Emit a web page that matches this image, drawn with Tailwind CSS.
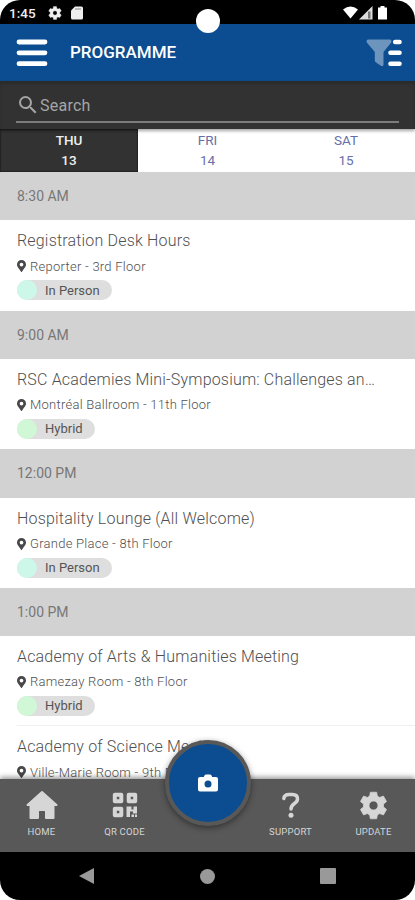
<!DOCTYPE html>
<html lang="en">
<head>
<meta charset="utf-8">
<title>Programme</title>
<script src="https://cdn.jsdelivr.net/npm/@tailwindcss/browser@4"></script>
</head>
<body class="bg-white">
<svg class="hidden">
  <symbol id="pin" viewBox="0 0 384 512"><path fill="currentColor" d="M172 502C27 291 0 270 0 192a192 192 0 1 1 384 0c0 78-27 99-172 310a24 24 0 0 1-40 0zM192 272a80 80 0 1 0 0-160 80 80 0 0 0 0 160z"/></symbol>
  <symbol id="gear" viewBox="0 0 24 24"><path fill="currentColor" fill-rule="evenodd" d="M9.4 1h5.2l.6 3.2 1.9 1.1 3.1-1.1 2.6 4.500-2.500 2.100v2.400l2.500 2.100-2.600 4.500-3.100-1.100-1.900 1.100-.6 3.200H9.400l-.6-3.200-1.900-1.100-3.100 1.100-2.600-4.500 2.500-2.100v-2.400L1.200 8.700l2.600-4.500 3.100 1.100 1.900-1.100zM12 8.300a3.700 3.700 0 1 0 0 7.400 3.700 3.700 0 0 0 0-7.400z" stroke="currentColor" stroke-width=".6" stroke-linejoin="round"/></symbol>
</svg>
<div class="relative flex flex-col w-[415px] h-[900px] overflow-hidden rounded-[20px] bg-white font-['Roboto',sans-serif] text-[#505050]">
  <div class="relative h-6 shrink-0 bg-black text-[#eee] flex items-center pl-[9px] pr-[27px]">
    <span class="text-[13.500px] leading-6 font-medium pt-[2px] w-[39px]">1:45</span>
    <svg class="size-[14px] mt-[2px]"><use href="#gear"/></svg>
    <svg class="ml-[9px] mt-[2px] w-3 h-[14px]" viewBox="0 0 12 14"><path fill="currentColor" d="M4 .5h6.500a1.500 1.500 0 0 1 1.500 1.500v10a1.500 1.500 0 0 1-1.500 1.500h-9A1.500 1.500 0 0 1 0 12V4.500z"/><path stroke="#888" d="M5 2v2M7 2v2M9 2v2"/></svg>
    <svg class="ml-auto mt-[2px] w-[46px] h-[14px]" viewBox="0 0 46 14"><path fill="#fff" d="M1 3.500Q8.500-2.500 16 3.500L8.500 12.500z"/><path fill="#ddd" d="M17 13.500L30.500 0v13.500z"/><path fill="#777" d="M26 5.500h2.500v7H26z"/><path fill="#fff" d="M38.500 0h4v1.500H45v12h-9v-12h2.500z"/></svg>
    <div class="absolute z-10 left-[196px] top-[9px] size-6 rounded-full bg-white"></div>
  </div>
  <header class="h-[57px] shrink-0 bg-[#0b4d90] flex items-center pl-4 pr-[13px] text-white">
    <svg class="w-8 h-[28px]" viewBox="0 0 32 28"><path stroke="#fff" stroke-width="4.800" stroke-linecap="round" d="M3 3h26M3 13.800h26M3 24.700h26"/></svg>
    <h1 class="ml-[22px] mt-px text-[17px] font-medium">PROGRAMME</h1>
    <svg class="ml-auto w-[36px] h-[28px]" viewBox="0 0 36 28"><path fill="#6d94bd" d="M2.500.5h21c2 0 2.500 2 1.500 3.300L17.500 13v12.500c0 1.500-1.500 2-2.700 1.200l-5-3.500c-.7-.5-1-1-1-1.800V13L1 3.800C0 2.500.5.500 2.500.5z"/><path stroke="#fff" stroke-width="4.600" stroke-linecap="round" d="M29.200 3h4.300M24.500 13.800h9M24.500 24.700h9"/></svg>
  </header>
  <div class="relative z-10 h-12 shrink-0 bg-[#323232] px-4 shadow-[0_2px_3px_rgba(0,0,0,.35),inset_0_3px_3px_rgba(0,0,0,.15)]">
    <div class="h-[42px] border-b-2 border-[#7c7c7c] flex items-center pt-[8px] text-[#a5a5a5]">
      <svg class="size-[24px]" viewBox="0 0 24 24"><path fill="currentColor" d="M15.500 14h-.79l-.28-.27A6.470 6.470 0 0 0 16 9.500 6.500 6.500 0 1 0 9.500 16c1.610 0 3.090-.59 4.230-1.570l.27.28v.79l5 4.990L20.490 19l-4.990-5zm-6 0C7.010 14 5 11.990 5 9.500S7.010 5 9.500 5 14 7.010 14 9.500 11.990 14 9.500 14z"/></svg>
      <span class="text-base pt-px tracking-[0.25px]">Search</span>
    </div>
  </div>
  <div class="h-[43px] shrink-0 flex text-center text-[13.500px] leading-5 pt-px text-[#6670a8]">
    <div class="w-[138px] -mt-px pt-px bg-[#323232] text-[#eee] font-medium shadow-[inset_0_0_2px_#000]">THU<br>13</div>
    <div class="w-[139px]">FRI<br>14</div>
    <div class="flex-1">SAT<br>15</div>
  </div>
  <main id="list" class="flex-1 min-h-0 overflow-hidden">
    <h2 class="h-[48.400px] bg-[#d2d2d2] pl-[17px] text-[14px] leading-[49px] text-[#777]">8:30 AM</h2>
    <article class="h-[90.200px] pl-[17px] pt-[10px]">
      <h3 class="text-[16px] leading-[22px] font-light tracking-[0.18px]">Registration Desk Hours</h3>
      <p class="flex items-center h-[28px] text-[13px] font-light tracking-[0.26px]"><svg class="w-[9px] h-3 mr-1 text-[#484848]"><use href="#pin"/></svg>Reporter - 3rd Floor</p>
      <span class="flex items-center w-[95px] h-5 rounded-full bg-[#dedede] text-[13px] text-[#555]"><i class="size-5 rounded-full bg-[#cdf7e9] mr-2"></i>In Person</span>
    </article>
    <h2 class="h-[48.400px] bg-[#d2d2d2] pl-[17px] text-[14px] leading-[49px] text-[#777]">9:00 AM</h2>
    <article class="h-[90.200px] pl-[17px] pt-[10px]">
      <h3 class="text-[16px] leading-[22px] font-light tracking-[0.18px]">RSC Academies Mini-Symposium: Challenges an…</h3>
      <p class="flex items-center h-[28px] text-[13px] font-light tracking-[0.26px]"><svg class="w-[9px] h-3 mr-1 text-[#484848]"><use href="#pin"/></svg>Montréal Ballroom - 11th Floor</p>
      <span class="flex items-center w-[78px] h-5 rounded-full bg-[#dedede] text-[13px] text-[#555]"><i class="size-5 rounded-full bg-[#d0f7d6] mr-2"></i>Hybrid</span>
    </article>
    <h2 class="h-[48.400px] bg-[#d2d2d2] pl-[17px] text-[14px] leading-[49px] text-[#777]">12:00 PM</h2>
    <article class="h-[90.200px] pl-[17px] pt-[10px]">
      <h3 class="text-[16px] leading-[22px] font-light tracking-[0.2px]">Hospitality Lounge (All Welcome)</h3>
      <p class="flex items-center h-[28px] text-[13px] font-light tracking-[0.26px]"><svg class="w-[9px] h-3 mr-1 text-[#484848]"><use href="#pin"/></svg>Grande Place - 8th Floor</p>
      <span class="flex items-center w-[95px] h-5 rounded-full bg-[#dedede] text-[13px] text-[#555]"><i class="size-5 rounded-full bg-[#cdf7e9] mr-2"></i>In Person</span>
    </article>
    <h2 class="h-[48.400px] bg-[#d2d2d2] pl-[17px] text-[14px] leading-[49px] text-[#777]">1:00 PM</h2>
    <article class="h-[90.200px] ml-[17px] pt-[10px] border-b border-[#f0f0f0]">
      <h3 class="text-[16px] leading-[22px] font-light tracking-[0.18px]">Academy of Arts &amp; Humanities Meeting</h3>
      <p class="flex items-center h-[28px] text-[13px] font-light tracking-[0.26px]"><svg class="w-[9px] h-3 mr-1 text-[#484848]"><use href="#pin"/></svg>Ramezay Room - 8th Floor</p>
      <span class="flex items-center w-[78px] h-5 rounded-full bg-[#dedede] text-[13px] text-[#555]"><i class="size-5 rounded-full bg-[#d0f7d6] mr-2"></i>Hybrid</span>
    </article>
    <article class="pl-[17px] pt-[10px]">
      <h3 class="text-[16px] leading-[22px] font-light tracking-[0.18px]">Academy of Science Meeting</h3>
      <p class="flex items-center h-[28px] text-[13px] font-light tracking-[0.26px]"><svg class="w-[9px] h-3 mr-1 text-[#484848]"><use href="#pin"/></svg>Ville-Marie Room - 9th Floor</p>
    </article>
  </main>
  <footer class="relative h-[73px] shrink-0 bg-[#585858] shadow-[0_-2px_5px_rgba(0,0,0,.4)] grid grid-cols-5 text-[9.500px] leading-[14px] tracking-[0.2px] text-[#d6d6d6]">
    <div class="flex flex-col items-center pt-[11px]"><svg class="w-[32px] h-[30px]" viewBox="0 0 32 30"><path fill="currentColor" stroke="currentColor" stroke-width="2" stroke-linejoin="round" d="M16 2L30.500 15H27.500V28H20v-6.500q0-1.500-1.500-1.500h-5q-1.500 0-1.500 1.500V28H4.500V15H1.500z"/></svg><span class="mt-[5px]">HOME</span></div>
    <div class="flex flex-col items-center pt-[13px]"><svg class="w-[26px] h-[26px]" viewBox="0 0 26 26"><g fill="none" stroke="currentColor" stroke-width="4" stroke-linejoin="round"><rect x="2.800" y="2.800" width="6.500" height="6.500"/><rect x="16.700" y="2.800" width="6.500" height="6.500"/><rect x="2.800" y="16.700" width="6.500" height="6.500"/></g><path fill="currentColor" d="M14.500 14.500h5v3h2v-3H25v7h-4v-2h-3V25h-3.500zM19.500 22.500H22V25h-2.500zM23 22.500h2V25h-2z"/></svg><span class="mt-[7px]">QR CODE</span></div>
    <div></div>
    <div class="flex flex-col items-center pt-[13px]"><svg class="w-[20px] h-[26px]" viewBox="0 0 20 26"><path fill="none" stroke="currentColor" stroke-width="3.500" stroke-linecap="round" stroke-linejoin="round" d="M2.800 6.500Q3.300 2.500 8 2.500h3.500q5 0 5 4.500c0 5-6.500 4-6.500 10"/><circle cx="10" cy="23.200" r="2.500" fill="currentColor"/></svg><span class="mt-[7px]">SUPPORT</span></div>
    <div class="flex flex-col items-center pt-[12px]"><svg class="size-[29px]"><use href="#gear"/></svg><span class="mt-[5px]">UPDATE</span></div>
    <div class="absolute left-[165px] top-[-39px] size-[86px] rounded-full border-4 border-[#585858] bg-[#0b4d90] shadow-[0_2px_6px_rgba(0,0,0,.45)] flex items-center justify-center">
      <svg class="w-5 h-[18px]" viewBox="0 0 20 18"><path fill="#fff" fill-rule="evenodd" d="M6.500 1.500Q7 .5 8 .5h4q1 0 1.500 1l.7 1.500H18a2 2 0 0 1 2 2v10.500a2 2 0 0 1-2 2H2a2 2 0 0 1-2-2V5a2 2 0 0 1 2-2h3.800zM10 6.500a3.500 3.500 0 1 0 0 7 3.500 3.500 0 0 0 0-7z"/></svg>
    </div>
  </footer>
  <nav class="h-[48px] shrink-0 bg-black grid grid-cols-[174px_67px_173px] items-center justify-items-center">
    <svg class="size-4" viewBox="0 0 16 16"><path fill="#999" d="M15 0v16L0 8z"/></svg>
    <div class="size-[15px] rounded-full bg-[#999]"></div>
    <div class="size-4 rounded-[1px] bg-[#999]"></div>
  </nav>
</div>
</body>
</html>
